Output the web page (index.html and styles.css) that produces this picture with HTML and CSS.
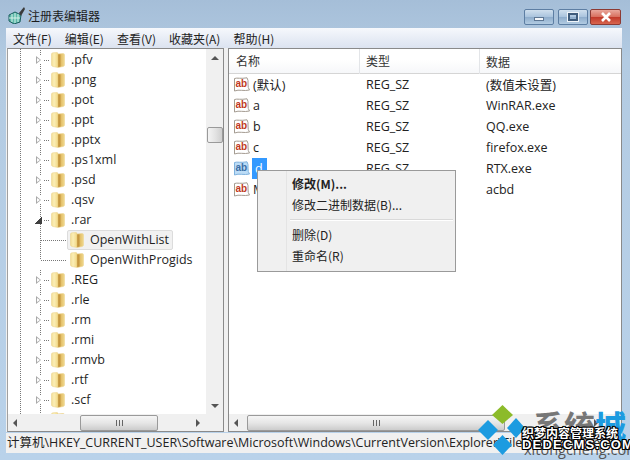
FILE: index.html
```html
<!DOCTYPE html>
<html lang="zh">
<head>
<meta charset="utf-8">
<title>注册表编辑器</title>
<link rel="stylesheet" href="styles.css">
</head>
<body>
<svg class="defs" width="0" height="0">
  <defs>
    <linearGradient id="fg" x1="0" x2="1" y1="0" y2="0">
      <stop offset="0" stop-color="#f2dd94"/><stop offset=".2" stop-color="#fbeeb6"/><stop offset=".45" stop-color="#f3dc8e"/><stop offset=".55" stop-color="#cfa34a"/><stop offset=".72" stop-color="#e2bd66"/><stop offset="1" stop-color="#f0d98e"/>
    </linearGradient>
    <symbol id="folder" viewBox="0 0 14 16">
      <path d="M.500 2 Q.500 1 2 .800 L6 .500 Q7 .500 7 2 L12 1.500 Q13.500 1.500 13.500 3 L13.500 13 Q13.500 14 12 14.500 L7 15.500 L2 14.500 Q.500 14 .500 13 Z" fill="url(#fg)" stroke="#ecd592" stroke-width=".6"/>
      <path d="M7.500 2.500 L7.500 15 L9.500 14.500 L9.500 2.500 Z" fill="#b98730" opacity=".6"/>
    </symbol>
    <symbol id="ab" viewBox="0 0 18 15">
      <path d="M1.500 1.500 C4 .5 8 2 14 .8 Q15.500 3 15 7 Q14.800 11 16.500 13 C11 14.500 6 12 1.500 14 Z" fill="#fff" stroke="#a59c92"/>
      <text x="2.500" y="10" class="ab-text">ab</text>
    </symbol>
    <symbol id="ab-sel" viewBox="0 0 18 15">
      <path d="M1.500 1.500 C4 .5 8 2 14 .8 Q15.500 3 15 7 Q14.800 11 16.500 13 C11 14.500 6 12 1.500 14 Z" fill="#bcdcf6" stroke="#7fb2de"/>
      <text x="2.500" y="10" class="ab-text-sel">ab</text>
    </symbol>
  </defs>
</svg>
<div class="window">
  <header class="titlebar">
    <svg class="app-icon" width="18" height="18" viewBox="0 0 18 18">
      <path d="M1 9 L7 6 L13 9 L12 16 L6 18 L1 15 Z" fill="#5ab8a8" stroke="#1d5f60"/>
      <path d="M4 8 L4 16 M7 7 L7 17 M10 8 L10 16 M1 12 L12 12" stroke="#d8f2ea" fill="none"/>
      <path d="M11 7 L16 1 L17 3 L13 10 Z" fill="#3a3a3a"/>
    </svg>
    <span class="title">注册表编辑器</span>
    <div class="controls">
      <span class="ctl"><i class="min"></i></span>
      <span class="ctl"><i class="max"></i></span>
      <span class="ctl close"><svg width="12" height="10" viewBox="0 0 12 10"><path d="M2 1 L10 9 M10 1 L2 9" stroke="#fff" stroke-width="2.600"/></svg></span>
    </div>
  </header>
  <nav class="menubar">
    <span>文件(F)</span><span>编辑(E)</span><span>查看(V)</span><span>收藏夹(A)</span><span>帮助(H)</span>
  </nav>
  <main class="panes">
    <section class="tree-pane">
      <div class="tree-body">
        <ul class="tree">
          <li class="row"><i class="arrow"></i><i class="dash"></i><svg class="folder"><use href="#folder"/></svg><span class="name">.pfv</span></li>
          <li class="row"><i class="arrow"></i><i class="dash"></i><svg class="folder"><use href="#folder"/></svg><span class="name">.png</span></li>
          <li class="row"><i class="arrow"></i><i class="dash"></i><svg class="folder"><use href="#folder"/></svg><span class="name">.pot</span></li>
          <li class="row"><i class="arrow"></i><i class="dash"></i><svg class="folder"><use href="#folder"/></svg><span class="name">.ppt</span></li>
          <li class="row"><i class="arrow"></i><i class="dash"></i><svg class="folder"><use href="#folder"/></svg><span class="name">.pptx</span></li>
          <li class="row"><i class="arrow"></i><i class="dash"></i><svg class="folder"><use href="#folder"/></svg><span class="name">.ps1xml</span></li>
          <li class="row"><i class="arrow"></i><i class="dash"></i><svg class="folder"><use href="#folder"/></svg><span class="name">.psd</span></li>
          <li class="row"><i class="arrow"></i><i class="dash"></i><svg class="folder"><use href="#folder"/></svg><span class="name">.qsv</span></li>
          <li class="row"><i class="arrow open"></i><i class="dash"></i><svg class="folder"><use href="#folder"/></svg><span class="name">.rar</span></li>
          <li class="row child"><i class="elbow"></i><span class="sel"><svg class="folder"><use href="#folder"/></svg><span class="name">OpenWithList</span></span></li>
          <li class="row child last"><i class="elbow"></i><span class="nosel"><svg class="folder"><use href="#folder"/></svg><span class="name">OpenWithProgids</span></span></li>
          <li class="row"><i class="arrow"></i><i class="dash"></i><svg class="folder"><use href="#folder"/></svg><span class="name">.REG</span></li>
          <li class="row"><i class="arrow"></i><i class="dash"></i><svg class="folder"><use href="#folder"/></svg><span class="name">.rle</span></li>
          <li class="row"><i class="arrow"></i><i class="dash"></i><svg class="folder"><use href="#folder"/></svg><span class="name">.rm</span></li>
          <li class="row"><i class="arrow"></i><i class="dash"></i><svg class="folder"><use href="#folder"/></svg><span class="name">.rmi</span></li>
          <li class="row"><i class="arrow"></i><i class="dash"></i><svg class="folder"><use href="#folder"/></svg><span class="name">.rmvb</span></li>
          <li class="row"><i class="arrow"></i><i class="dash"></i><svg class="folder"><use href="#folder"/></svg><span class="name">.rtf</span></li>
          <li class="row"><i class="arrow"></i><i class="dash"></i><svg class="folder"><use href="#folder"/></svg><span class="name">.scf</span></li>
          <li class="row"><i class="arrow"></i><i class="dash"></i><svg class="folder"><use href="#folder"/></svg></li>
        </ul>
        <div class="vscroll">
          <i class="tri up"></i>
          <div class="vtrack"><i class="vthumb"></i></div>
          <i class="tri down"></i>
        </div>
      </div>
      <div class="hscroll">
        <i class="tri left"></i>
        <div class="htrack tree-track"><i class="hthumb"><b class="grip"></b></i></div>
        <i class="tri right"></i>
        <i class="corner"></i>
      </div>
    </section>
    <section class="list-pane">
      <div class="list-head">
        <span class="col-name">名称</span><span class="col-type">类型</span><span class="col-data">数据</span>
      </div>
      <div class="list-body">
        <div class="item"><svg class="ab"><use href="#ab"/></svg><span class="col-name">(默认)</span><span class="col-type">REG_SZ</span><span class="col-data">(数值未设置)</span></div>
        <div class="item"><svg class="ab"><use href="#ab"/></svg><span class="col-name">a</span><span class="col-type">REG_SZ</span><span class="col-data">WinRAR.exe</span></div>
        <div class="item"><svg class="ab"><use href="#ab"/></svg><span class="col-name">b</span><span class="col-type">REG_SZ</span><span class="col-data">QQ.exe</span></div>
        <div class="item"><svg class="ab"><use href="#ab"/></svg><span class="col-name">c</span><span class="col-type">REG_SZ</span><span class="col-data">firefox.exe</span></div>
        <div class="item"><svg class="ab"><use href="#ab-sel"/></svg><span class="col-name"><em class="picked">d</em></span><span class="col-type">REG_SZ</span><span class="col-data">RTX.exe</span></div>
        <div class="item"><svg class="ab"><use href="#ab"/></svg><span class="col-name">MRUList</span><span class="col-type">REG_SZ</span><span class="col-data">acbd</span></div>
      </div>
      <div class="hscroll">
        <i class="tri left"></i>
        <div class="htrack list-track"><i class="hthumb wide"><b class="grip"></b></i></div>
        <i class="tri right"></i>
        <i class="corner"></i>
      </div>
      <div class="menu">
        <div class="menu-item strong">修改(M)...</div>
        <div class="menu-item">修改二进制数据(B)...</div>
        <hr class="menu-sep">
        <div class="menu-item">删除(D)</div>
        <div class="menu-item">重命名(R)</div>
      </div>
    </section>
  </main>
  <footer class="status">计算机\HKEY_CURRENT_USER\Software\Microsoft\Windows\CurrentVersion\Explorer\FileExts\.rar\OpenWithList</footer>
  <div class="watermark">
    <svg class="wm-logo" width="60" height="60" viewBox="470 400 60 60">
      <path d="M502.500 405 L513 415 L502.500 424 L492 415 Z" fill="#8cbb2a"/>
      <path d="M488 420 L498 430 L488 440 L478 430 Z" fill="#1c9be0"/>
      <path d="M516 418 L525 428 L516 438 L507 428 Z" fill="#1c9be0"/>
      <path d="M502.500 435 L512 445 L502.500 455 L493 445 Z" fill="#1c9be0"/>
    </svg>
    <span class="wm-brand">系统<b>城</b></span>
    <span class="wm-url">xitongcheng.com</span>
    <span class="wm-cn">织梦内容管理系统</span>
    <span class="wm-en">DEDECMS.COM</span>
  </div>
</div>
</body>
</html>
```

FILE: styles.css
```css
* { box-sizing: border-box; }
html, body { margin: 0; padding: 0; }
body {
  width: 630px;
  height: 460px;
  overflow: hidden;
  font-family: "Open Sans", "Noto Sans CJK SC", sans-serif;
  font-size: 12px;
  color: #222;
}
.defs { position: absolute; }
.window {
  position: relative;
  width: 630px;
  height: 460px;
  padding: 0 8px 7px 6px;
  display: flex;
  flex-direction: column;
  background: linear-gradient(180deg, #a5bed8 0, #b3cbe2 60px, #b9d2ea 100%);
}
.titlebar {
  height: 28px;
  display: flex;
  align-items: center;
  flex: none;
  padding-left: 2px;
}
.app-icon { margin-right: 2px; margin-top: 2px; }
.title {
  font-family: "Noto Sans CJK SC", sans-serif;
  font-size: 12px;
  color: #1c1c1c;
  margin-top: 3px;
}
.controls {
  margin-left: auto;
  display: flex;
  gap: 4px;
  align-self: flex-start;
  margin-top: 9px;
  margin-right: 1px;
}
.ctl {
  width: 30px;
  height: 16px;
  border: 1px solid #5d7ea3;
  border-radius: 2px;
  background: linear-gradient(180deg, #cfdfee 0, #a9c3dd 50%, #8fadcc 52%, #b2cbe2 100%);
  display: flex;
  align-items: center;
  justify-content: center;
}
.ctl.close {
  width: 31px;
  margin-left: -2px;
  border-color: #8d3a33;
  background: linear-gradient(180deg, #e9a79c 0, #d8705f 48%, #c1392a 52%, #d8654f 100%);
}
.min { width: 10px; height: 4px; background: #f2f5f9; border: 1px solid #5e7794; margin-top: 3px; }
.max { width: 10px; height: 8px; background: transparent; border: 2px solid #3f5c7c; box-shadow: 0 0 0 1px #eef3f8; }
.menubar {
  height: 20px;
  flex: none;
  display: flex;
  align-items: center;
  padding-left: 7px;
  gap: 13px;
  background: linear-gradient(180deg, #f6f8fc 0, #e8edf6 50%, #dce3f0 100%);
  font-family: "Noto Sans CJK SC", sans-serif;
  font-size: 12px;
}
.panes {
  flex: 1;
  min-height: 0;
  display: flex;
  gap: 4px;
  padding-left: 1px;
  background: #f0f0f0;
}
.tree-pane {
  width: 217px;
  flex: none;
  display: flex;
  flex-direction: column;
  background: #fff;
  border: 1px solid #8a8a8a;
  border-left-color: #a0a0a0;
}
.tree-body { flex: 1; min-height: 0; display: flex; overflow: hidden; }
.tree {
  list-style: none;
  margin: 0;
  padding: 1px 0 0 13px;
  flex: 1;
  min-width: 0;
  background:
    repeating-linear-gradient(180deg, #777 0 1px, transparent 1px 2px) 12px 0 / 1px 100% no-repeat;
}
.row {
  height: 20px;
  display: flex;
  align-items: center;
  font-size: 12.500px;
  white-space: nowrap;
  position: relative;
  color: #1f1f1f;
  background: repeating-linear-gradient(180deg, #777 0 1px, transparent 1px 2px) 19px 0 / 1px 100% no-repeat;
}
.name { margin-top: -2px; }
.row.last { background-size: 1px 10px; }
.arrow {
  width: 0;
  height: 0;
  margin-left: 15px;
  border-left: 5px solid #a9a9a9;
  border-top: 4px solid transparent;
  border-bottom: 4px solid transparent;
  position: relative;
  background: #fff;
  flex: none;
}
.arrow::after {
  content: "";
  position: absolute;
  left: -4px;
  top: -2px;
  border-left: 3px solid #fff;
  border-top: 2px solid transparent;
  border-bottom: 2px solid transparent;
}
.arrow.open {
  margin-left: 14px;
  border: 0;
  width: 7px;
  height: 7px;
  background: linear-gradient(135deg, transparent 50%, #404040 50%);
}
.arrow.open::after { display: none; }
.dash {
  width: 5px;
  height: 1px;
  margin-left: 3px;
  margin-right: 2px;
  flex: none;
  background: repeating-linear-gradient(90deg, #777 0 1px, transparent 1px 2px);
}
.arrow.open + .dash { margin-left: 2px; margin-right: 2px; }
.folder { width: 14px; height: 16px; flex: none; margin-right: 6px; }
.elbow {
  width: 26px;
  height: 1px;
  margin-left: 20px;
  flex: none;
  background: repeating-linear-gradient(90deg, #777 0 1px, transparent 1px 2px);
}
.sel, .nosel {
  display: flex;
  align-items: center;
  height: 20px;
  padding: 0 3px 0 2px;
  border: 1px solid transparent;
  border-radius: 2px;
}
.sel { background: #f1f1f1; border-color: #dcdcdc; }
.vscroll {
  width: 17px;
  flex: none;
  display: flex;
  flex-direction: column;
  align-items: center;
  background: #f0f0f0;
}
.vtrack { flex: 1; width: 100%; padding-top: 64px; }
.vthumb {
  display: block;
  width: 16px;
  height: 16px;
  margin-left: 1px;
  border: 1px solid #9a9a9a;
  border-radius: 2px;
  background: linear-gradient(90deg, #f4f4f4 0, #e2e2e2 55%, #cfcfcf 100%);
}
.tri { width: 0; height: 0; flex: none; display: block; }
.tri.up { margin: 7px 0 3px; border: 4px solid transparent; border-top: 0; border-bottom: 4px solid #555; }
.tri.down { margin: 5px 0 6px; border: 4px solid transparent; border-bottom: 0; border-top: 4px solid #555; }
.tri.left { margin: 0 6px 0 5px; border: 4px solid transparent; border-left: 0; border-right: 4px solid #555; }
.tri.right { margin: 0 6px; border: 4px solid transparent; border-right: 0; border-left: 4px solid #555; }
.hscroll {
  height: 17px;
  flex: none;
  display: flex;
  align-items: center;
  background: #f0f0f0;
}
.htrack { flex: 1; min-width: 0; height: 100%; display: flex; align-items: center; }
.tree-track { padding-left: 57px; }
.list-track { padding-left: 3px; }
.hthumb {
  display: flex;
  align-items: center;
  justify-content: center;
  width: 78px;
  height: 16px;
  border: 1px solid #9a9a9a;
  border-radius: 2px;
  background: linear-gradient(180deg, #f5f5f5 0, #e6e6e6 50%, #cccccc 100%);
}
.hthumb.wide { width: 258px; }
.grip {
  width: 7px;
  height: 6px;
  background: repeating-linear-gradient(90deg, #666 0 1px, transparent 1px 3px);
}
.corner { width: 17px; height: 17px; flex: none; }
.list-pane {
  flex: 1;
  min-width: 0;
  display: flex;
  flex-direction: column;
  background: #fff;
  border: 1px solid #8a8a8a;
  position: relative;
  font-size: 12.500px;
}
.list-head {
  height: 25px;
  flex: none;
  display: flex;
  align-items: center;
  padding-left: 7px;
  border-bottom: 1px solid #d5d5d5;
  background: linear-gradient(180deg, #fff 0, #fff 45%, #f6f7f9 100%);
  font-family: "Noto Sans CJK SC", sans-serif;
  font-size: 12px;
  color: #333;
}
.list-head .col-name { width: 124px; height: 25px; line-height: 24px; border-right: 1px solid #e3e5e8; }
.list-head .col-type { width: 120px; height: 25px; line-height: 24px; border-right: 1px solid #e3e5e8; padding-left: 6px; }
.list-head .col-data { padding-left: 6px; }
.list-body { flex: 1; min-height: 0; padding: 0 0 0 4px; }
.item {
  height: 21px;
  display: flex;
  align-items: center;
  white-space: nowrap;
  color: #222;
}
.ab { width: 18px; height: 15px; flex: none; margin-right: 2px; }
.ab-text { font-family: "Liberation Sans", sans-serif; font-size: 10px; font-weight: 700; fill: #c0391e; }
.ab-text-sel { font-family: "Liberation Sans", sans-serif; font-size: 10px; font-weight: 700; fill: #3a6ea5; }
.item .col-name { width: 107px; flex: none; }
.item .col-type { width: 120px; flex: none; padding-left: 6px; }
.item .col-data { padding-left: 6px; }
.picked {
  font-style: normal;
  display: inline-block;
  background: #3399ff;
  color: #fff;
  width: 15px;
  padding-left: 3px;
  margin-left: -1px;
  line-height: 21px;
  height: 21px;
}
.menu {
  position: absolute;
  left: 28px;
  top: 121px;
  width: 199px;
  height: 102px;
  padding: 2px;
  background: linear-gradient(90deg, #f0f0f0 0 28px, #e4e4e4 28px 29px, #f0f0f0 29px);
  border: 1px solid #9a9a9a;
  font-family: "Noto Sans CJK SC", sans-serif;
  font-size: 12px;
  color: #222;
}
.menu-item { height: 21px; line-height: 21px; padding-left: 32px; }
.menu-item.strong { font-weight: 700; }
.menu-sep { height: 2px; border: 0; margin: 4px 0 3px 30px; background: linear-gradient(180deg, #d9d9d9 50%, #fff 50%); }
.status {
  height: 20px;
  flex: none;
  margin-top: 1px;
  padding-left: 1px;
  line-height: 20px;
  background: #f0f0f0;
  color: #222;
  font-size: 12.500px;
  white-space: nowrap;
  overflow: hidden;
}
.watermark {
  position: absolute;
  left: 0;
  top: 0;
  width: 630px;
  height: 460px;
  overflow: hidden;
  pointer-events: none;
}
.wm-logo { position: absolute; left: 470px; top: 400px; }
.wm-brand {
  position: absolute;
  left: 533px;
  top: 407px;
  font-family: "Noto Sans CJK SC", sans-serif;
  font-size: 31px;
  line-height: 36px;
  font-weight: 700;
  color: #777;
  white-space: nowrap;
}
.wm-brand b { color: #1c9be0; }
.wm-url {
  position: absolute;
  left: 524px;
  top: 441px;
  font-family: "Open Sans", sans-serif;
  font-size: 14.500px;
  line-height: 18px;
  color: #555;
}
.wm-cn, .wm-en {
  position: absolute;
  font-weight: 700;
  color: #fff;
  white-space: nowrap;
  text-shadow: 1px 0 0 #000, -1px 0 0 #000, 0 1px 0 #000, 0 -1px 0 #000, 1px 1px 0 #000, -1px -1px 0 #000, 1px -1px 0 #000, -1px 1px 0 #000;
}
.wm-cn {
  left: 522px;
  top: 425px;
  font-family: "Noto Sans CJK SC", sans-serif;
  font-size: 12px;
  line-height: 16px;
}
.wm-en {
  left: 522px;
  top: 437px;
  font-family: "Liberation Sans", sans-serif;
  font-size: 13px;
  line-height: 16px;
  letter-spacing: 1.200px;
}
```
